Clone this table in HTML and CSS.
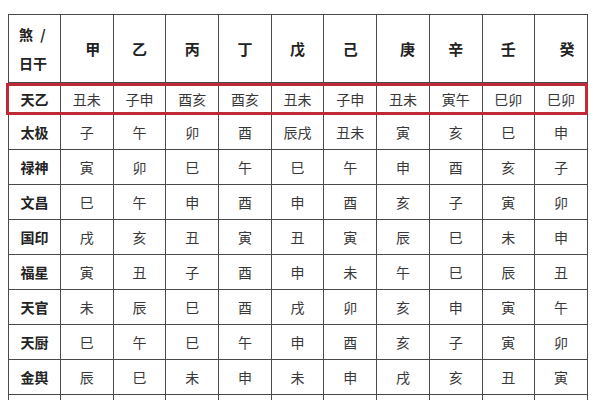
FILE: index.html
```html
<!DOCTYPE html>
<html>
<head>
<meta charset="utf-8">
<link rel="stylesheet" href="styles.css">
</head>
<body>
<div class="wrap">
<table class="sha">
<colgroup><col class="c0"><col span="10"></colgroup>
<tr class="head">
<th class="corner"><span class="sl">煞 /</span><br>日干</th>
<th class="shift">甲</th><th>乙</th><th>丙</th><th>丁</th><th>戊</th><th>己</th><th class="shift2">庚</th><th>辛</th><th>壬</th><th class="shift">癸</th>
</tr>
<tr class="first"><th>天乙</th><td>丑未</td><td>子申</td><td>酉亥</td><td>酉亥</td><td>丑未</td><td>子申</td><td>丑未</td><td>寅午</td><td>巳卯</td><td>巳卯</td></tr>
<tr><th>太极</th><td>子</td><td>午</td><td>卯</td><td>酉</td><td>辰戌</td><td>丑未</td><td>寅</td><td>亥</td><td>巳</td><td>申</td></tr>
<tr><th>禄神</th><td>寅</td><td>卯</td><td>巳</td><td>午</td><td>巳</td><td>午</td><td>申</td><td>酉</td><td>亥</td><td>子</td></tr>
<tr><th>文昌</th><td>巳</td><td>午</td><td>申</td><td>酉</td><td>申</td><td>酉</td><td>亥</td><td>子</td><td>寅</td><td>卯</td></tr>
<tr><th>国印</th><td>戌</td><td>亥</td><td>丑</td><td>寅</td><td>丑</td><td>寅</td><td>辰</td><td>巳</td><td>未</td><td>申</td></tr>
<tr><th>福星</th><td>寅</td><td>丑</td><td>子</td><td>酉</td><td>申</td><td>未</td><td>午</td><td>巳</td><td>辰</td><td>丑</td></tr>
<tr><th>天官</th><td>未</td><td>辰</td><td>巳</td><td>酉</td><td>戌</td><td>卯</td><td>亥</td><td>申</td><td>寅</td><td>午</td></tr>
<tr><th>天厨</th><td>巳</td><td>午</td><td>巳</td><td>午</td><td>申</td><td>酉</td><td>亥</td><td>子</td><td>寅</td><td>卯</td></tr>
<tr><th>金舆</th><td>辰</td><td>巳</td><td>未</td><td>申</td><td>未</td><td>申</td><td>戌</td><td>亥</td><td>丑</td><td>寅</td></tr>
<tr><th>羊刃</th><td>卯</td><td>辰</td><td>午</td><td>未</td><td>午</td><td>未</td><td>酉</td><td>戌</td><td>子</td><td>丑</td></tr>
</table>
<div class="mark"></div>
</div>
</body>
</html>
```
FILE: styles.css
```css
html, body {
  margin: 0;
  padding: 0;
  background: #fff;
  overflow: hidden;
}
body {
  font-family: "Noto Sans CJK SC", "Noto Sans", sans-serif;
  color: #2a2a2a;
}
.wrap {
  position: relative;
  padding: 14px 0 0 8px;
}
.sha {
  border-collapse: collapse;
  table-layout: fixed;
  width: 580px;
}
.c0 { width: 52px; }
.sha th, .sha td {
  border: 1px solid #4a4a4a;
  padding: 0;
  text-align: center;
  font-size: 14px;
  line-height: 20px;
  height: 34px;
}
.sha th { font-weight: bold; color: #222; }
.sha td { font-weight: normal; color: #383838; }
.head th { height: 67px; font-size: 15px; }
.head .corner {
  text-align: left;
  padding-left: 10px;
  line-height: 29px;
  font-size: 14px;
}
.sl { word-spacing: 4px; }
.head .shift { padding-left: 12px; }
.head .shift2 { padding-left: 9px; }
.first th, .first td { height: 31px; }
.mark {
  position: absolute;
  left: 6px;
  top: 83px;
  width: 576px;
  height: 26px;
  border: 3px solid #c02a36;
}
```
